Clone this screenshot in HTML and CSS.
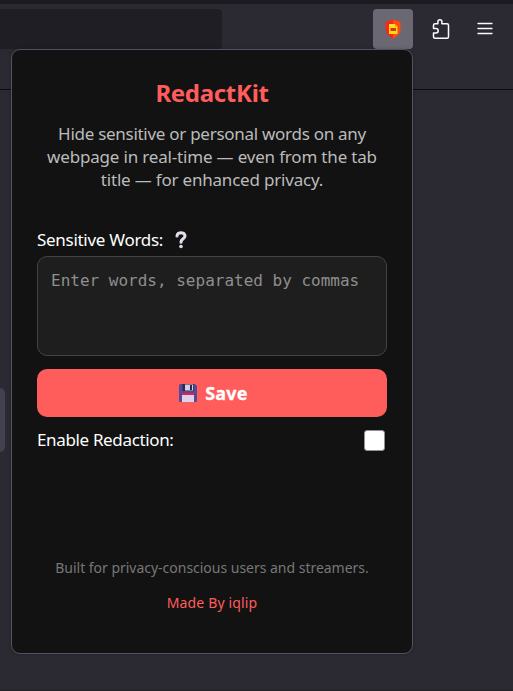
FILE: index.html
```html
<!DOCTYPE html>
<html lang="en">
<head>
<meta charset="utf-8">
<title>RedactKit</title>
<link rel="stylesheet" href="styles.css">
</head>
<body>
<div class="tabstrip"></div>
<header class="toolbar">
  <div class="urlbar"></div>
  <div class="actions">
    <div class="action active">
      <svg width="16" height="20" viewBox="0 0 16 20"><path d="M8 .5 15.500 3v7c0 4.500-3.500 7.500-7.500 9.500C4 17.500.5 14.500.5 10V3Z" fill="#f5281c"/><path d="M8 .5 15.500 3v7c0 4.500-3.500 7.500-7.500 9.500Z" fill="#ff4a16"/><path d="M4 5h6l2.500 2.500V15H4Z" fill="#ffde12"/><path d="M10 5v2.500h2.500Z" fill="#ff8a12"/><path d="M5.500 9h5.500v3H5.500Z" fill="#d8361a"/></svg>
    </div>
    <div class="action">
      <svg width="20" height="22" viewBox="0 0 20 22" fill="none" stroke="#fbfbfe" stroke-width="1.500" stroke-linejoin="round"><path d="M4 5.700H6.900V3.800a2 2 0 0 1 4 0V5.700H16a1.500 1.500 0 0 1 1.500 1.500V18.800a1.500 1.500 0 0 1-1.500 1.500H4A1.500 1.500 0 0 1 2.500 18.800V14.900H5a2.200 2.200 0 0 0 0-4.400H2.500V7.200A1.500 1.500 0 0 1 4 5.700"/></svg>
    </div>
    <div class="action">
      <svg width="16" height="14" viewBox="0 0 16 14" stroke="#fbfbfe" stroke-width="1.300" stroke-linecap="round"><path d="M1 1.500H15M1 6.500H15M1 11.500H15"/></svg>
    </div>
  </div>
</header>
<div class="side-handle"></div>
<div class="page-edge"></div>
<main class="popup">
  <h1 class="title">RedactKit</h1>
  <p class="intro"><span class="line l1">Hide sensitive or personal words on any</span> <span class="line l2">webpage in real-time — even from the tab</span> <span class="line l3">title — for enhanced privacy.</span></p>
  <div class="field-head">
    <label class="label words" for="words">Sensitive Words:</label>
    <svg width="12" height="18" viewBox="0 0 12 18" fill="none"><path d="M2 5.200C2 .8 10 .8 10 5.200c0 3-4 2.700-4 6.300" stroke="#8b8196" stroke-width="3.300" stroke-linecap="round"/><path d="M2 4.800C2 .6 10 .6 10 4.800c0 3-4 2.700-4 6.200" stroke="#e6dfee" stroke-width="2.500" stroke-linecap="round"/><circle cx="6" cy="15.500" r="1.800" fill="#e2d9e9"/></svg>
  </div>
  <textarea class="words-input" id="words" placeholder="Enter words, separated by commas"></textarea>
  <button class="save" type="button">
    <svg width="18" height="18" viewBox="0 0 18 18"><path d="M1.500 0H16l2 2v14.500a1.500 1.500 0 0 1-1.500 1.500h-15A1.500 1.500 0 0 1 0 16.500v-15A1.500 1.500 0 0 1 1.500 0Z" fill="#554a94"/><path d="M3.500 0h11v7h-11Z" fill="#30264e"/><path d="M6 .5h8v6H6Z" fill="#d6cfe2"/><path d="M11 1h2v5h-2Z" fill="#30264e"/><path d="M3 9h12v2.500H3Z" fill="#e51d58"/><path d="M3 11h12v7H3Z" fill="#ded0e8"/></svg>
    <span class="save-text">Save</span>
  </button>
  <div class="toggle-row">
    <label class="label enable" for="enable">Enable Redaction:</label>
    <input class="check" id="enable" type="checkbox">
  </div>
  <footer class="footer">
    <p class="built">Built for privacy-conscious users and streamers.</p>
    <p class="made">Made By iqlip</p>
  </footer>
</main>
</body>
</html>
```
FILE: styles.css
```css
* { box-sizing: border-box; }
body {
  margin: 0;
  height: 691px;
  overflow: hidden;
  position: relative;
  background: #2b2a33;
  font-family: "Noto Sans", "Open Sans", sans-serif;
  color: #fff;
}
svg { display: block; flex: none; }
.tabstrip { height: 4px; background: #1c1b22; }
.toolbar {
  height: 86px;
  padding-top: 5px;
  display: flex;
  justify-content: space-between;
  align-items: flex-start;
  border-bottom: 1px solid #0c0c0d;
}
.urlbar { width: 222px; height: 40px; background: #1f1e25; border-radius: 0 4px 4px 0; }
.actions { display: flex; gap: 8px; padding-right: 8px; }
.actions .action:last-child { margin-left: -4px; }
.action { width: 40px; height: 40px; display: flex; align-items: center; justify-content: center; border-radius: 4px; }
.active { background: #6a6973; }
.side-handle { position: absolute; left: 0; top: 388px; width: 5px; height: 64px; background: #42414d; border-radius: 0 6px 6px 0; }
.page-edge { position: absolute; left: 0; right: 0; bottom: 0; height: 1px; background: #222128; }
.popup {
  position: absolute;
  left: 11px;
  top: 49px;
  width: 402px;
  height: 605px;
  padding: 24px 25px;
  display: flex;
  flex-direction: column;
  background: #121212;
  border: 1px solid #52525e;
  border-radius: 9px;
  box-shadow: 0 0 4px rgba(0, 0, 0, .2);
}
.title { margin: 0; height: 38px; line-height: 38px; text-align: center; color: #ff5c5c; font-size: 24px; font-weight: 700; letter-spacing: -.3px; }
.intro { margin: 10px 0 0; text-align: center; color: #bbb; font-size: 17px; line-height: 23px; white-space: nowrap; }
.line { display: block; }
.l1 { letter-spacing: -.28px; }
.l2 { letter-spacing: -.18px; }
.l3 { letter-spacing: -.2px; }
.field-head { margin-top: 37px; height: 24px; display: flex; align-items: center; gap: 12px; }
.label { font-size: 17px; line-height: 24px; white-space: nowrap; }
.words { letter-spacing: -.29px; }
.enable { letter-spacing: -.35px; }
.words-input {
  display: block;
  width: 350px;
  height: 100px;
  margin: 4px 0 0;
  padding: 12px 13px;
  resize: none;
  background: #1e1e1e;
  border: 1px solid #444;
  border-radius: 10px;
  font: 16px/24px "DejaVu Sans Mono", monospace;
}
.words-input::placeholder { color: #8e8e8e; }
.save {
  width: 350px;
  height: 48px;
  margin: 13px 0 0;
  padding: 0 0 0 3px;
  display: flex;
  align-items: center;
  justify-content: center;
  gap: 8px;
  border: 0;
  border-radius: 10px;
  background: #ff5c5c;
  color: #fff;
  font: 700 17px/24px "Noto Sans", sans-serif;
}
.save-text { font-size: 18px; -webkit-text-stroke: .3px #fff; letter-spacing: .2px; }
.toggle-row { height: 24px; margin-top: 11px; padding-right: 2px; display: flex; align-items: center; justify-content: space-between; }
.check { appearance: none; width: 21px; height: 21px; margin: 0; background: #fff; border: 1px solid #8f8f9d; border-radius: 3px; }
.footer { margin-top: 105px; text-align: center; font-size: 14px; line-height: 22px; white-space: nowrap; }
.footer p { margin: 0; }
.built { color: #777; letter-spacing: -.02px; }
.footer .made { margin-top: 13px; color: #ff5c5c; letter-spacing: .15px; }
```
